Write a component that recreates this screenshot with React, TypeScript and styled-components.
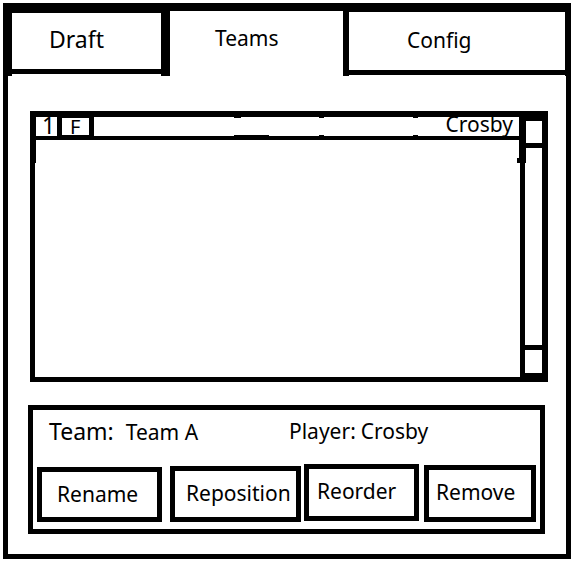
import React from "react";
import styled, { createGlobalStyle } from "styled-components";

const GlobalStyle = createGlobalStyle`
  *, *::before, *::after { box-sizing: border-box; }
  body {
    margin: 0;
    background: #fff;
    color: #000;
    font-family: "Noto Sans", "Open Sans", sans-serif;
    font-size: 21px;
    line-height: 28px;
  }
  button {
    margin: 0;
    background: none;
    color: inherit;
    font: inherit;
    text-align: left;
    white-space: nowrap;
    border: 0 solid #000;
    border-radius: 0;
    cursor: pointer;
  }
`;

const Window = styled.main`
  margin: 3px 5px 3px 3px;
`;

const Tabs = styled.nav`
  display: grid;
  grid-template-columns: 167fr 173fr 228fr;
  height: 73px;
`;

const TabCell = styled.div<{ $edges: string }>`
  border: 0 solid #000;
  border-width: ${(p) => p.$edges};
`;

const TabButton = styled.button<{ $pad: string; $large?: boolean; $open?: boolean; $height: number }>`
  display: flex;
  align-items: flex-start;
  width: 100%;
  height: ${(p) => p.$height}px;
  padding: ${(p) => p.$pad};
  border-bottom-width: ${(p) => (p.$open ? 0 : 5)}px;
  font-size: ${(p) => (p.$large ? 23 : 21)}px;
`;

const Body = styled.section`
  display: flex;
  flex-direction: column;
  gap: 23px;
  padding: 35px 18px 20px 20px;
  border: solid #000;
  border-width: 0 5px 5px;
`;

const ListBox = styled.div`
  display: grid;
  grid-template-columns: minmax(0, 1fr) 29px;
  min-height: 271px;
  margin-left: 2px;
  border: solid #000;
  border-width: 6px 0 5px 5px;
`;

const RosterArea = styled.div`
  align-self: start;
  height: 46px;
  border-left: 1px solid #000;
`;

const Roster = styled.table`
  width: 100%;
  height: 23px;
  table-layout: fixed;
  border-spacing: 0;
`;

const Cell = styled.td`
  height: 23px;
  padding: 0;
  vertical-align: top;
  border: 0 solid #000;
  border-bottom-width: 4px;
`;

const NumberCell = styled(Cell)`
  width: 21px;
  padding-left: 6px;
  font-size: 23px;
  line-height: 16px;
`;

const PositionCell = styled(Cell)`
  width: 37px;
  padding-left: 8px;
  border-width: 1px 5px 5px;
  font-size: 20px;
  line-height: 17px;
`;

const NameCell = styled(Cell)`
  position: relative;
  padding-right: 6px;
  text-align: right;
  line-height: 14px;
`;

const Tick = styled.span<{ $left: number; $width: number; $bottom?: boolean }>`
  position: absolute;
  left: ${(p) => p.$left}%;
  ${(p) => (p.$bottom ? "bottom: 0" : "top: 0")};
  width: ${(p) => p.$width}px;
  height: 1px;
  background: #000;
`;

const ScrollBar = styled.div`
  display: flex;
  flex-direction: column;
`;

const ScrollUp = styled.button`
  height: 31px;
  border-width: 4px 6px 5px 7px;
`;

const Track = styled.div`
  position: relative;
  flex: 1;
  margin-left: 1px;
  border: solid #000;
  border-width: 0 6px 0 5px;

  &::before,
  &::after {
    content: "";
    position: absolute;
    background: #000;
  }
  &::before {
    left: -6px;
    top: 0;
    width: 7px;
    height: 15px;
  }
  &::after {
    left: -8px;
    top: 10px;
    width: 9px;
    height: 5px;
  }
`;

const ScrollDown = styled.button`
  height: 32px;
  margin-left: 1px;
  border-width: 5px 6px 4px 5px;
`;

const Panel = styled.section`
  margin-right: 3px;
  padding: 7px 4px;
  border: 5px solid #000;
`;

const Details = styled.dl`
  display: grid;
  grid-template-columns: 240fr 247fr;
  margin: 0;
  padding-left: 12px;
  height: 47px;
`;

const Detail = styled.div<{ $gap: number }>`
  display: flex;
  align-items: baseline;
  gap: ${(p) => p.$gap}px;
  white-space: nowrap;
`;

const Term = styled.dt<{ $large?: boolean }>`
  font-size: ${(p) => (p.$large ? 23 : 21)}px;
`;

const Value = styled.dd`
  margin: 0;
`;

const Actions = styled.div`
  display: grid;
  grid-template-columns: 133fr 134fr 120fr 112fr;
  height: 58px;
`;

const ActionButton = styled.button<{ $margin: string; $indent: number }>`
  && {
    margin: ${(p) => p.$margin};
  }
  display: flex;
  align-items: flex-start;
  padding: 8px 0 0 ${(p) => p.$indent}px;
  border-width: 5px;
`;

const tabs = [
  { label: "Draft", edges: "10px 9px 0", pad: "12px 0 0 37px", height: 61, large: true, open: false },
  { label: "Teams", edges: "8px 0 0", pad: "13px 0 0 45px", height: 65, large: false, open: true },
  { label: "Config", edges: "9px 6px 0", pad: "14px 0 0 58px", height: 63, large: false, open: false },
];

const actions = [
  { label: "Rename", margin: "3px 8px 0 0", indent: 15 },
  { label: "Reposition", margin: "2px 3px 0 0", indent: 11 },
  { label: "Reorder", margin: "0 5px 1px 0", indent: 8 },
  { label: "Remove", margin: "1px 0 0 0", indent: 7 },
];

export default function App() {
  return (
    <>
      <GlobalStyle />
      <Window>
        <Tabs>
          {tabs.map((t) => (
            <TabCell key={t.label} $edges={t.edges}>
              <TabButton
                type="button"
                aria-current={t.open ? "page" : undefined}
                $pad={t.pad}
                $height={t.height}
                $large={t.large}
                $open={t.open}
              >
                {t.label}
              </TabButton>
            </TabCell>
          ))}
        </Tabs>
        <Body>
          <ListBox>
            <RosterArea>
              <Roster>
                <tbody>
                  <tr>
                    <NumberCell>1</NumberCell>
                    <PositionCell>F</PositionCell>
                    <NameCell>
                      Crosby
                      <Tick $left={33} $width={7} />
                      <Tick $left={33} $width={35} $bottom />
                      <Tick $left={53} $width={5} />
                      <Tick $left={53} $width={5} $bottom />
                      <Tick $left={75} $width={5} />
                      <Tick $left={75} $width={5} $bottom />
                    </NameCell>
                  </tr>
                </tbody>
              </Roster>
            </RosterArea>
            <ScrollBar>
              <ScrollUp type="button" aria-label="Scroll up" />
              <Track />
              <ScrollDown type="button" aria-label="Scroll down" />
            </ScrollBar>
          </ListBox>
          <Panel>
            <Details>
              <Detail $gap={12}>
                <Term $large>Team:</Term>
                <Value>Team A</Value>
              </Detail>
              <Detail $gap={5}>
                <Term>Player:</Term>
                <Value>Crosby</Value>
              </Detail>
            </Details>
            <Actions>
              {actions.map((a) => (
                <ActionButton key={a.label} type="button" $margin={a.margin} $indent={a.indent}>
                  {a.label}
                </ActionButton>
              ))}
            </Actions>
          </Panel>
        </Body>
      </Window>
    </>
  );
}
